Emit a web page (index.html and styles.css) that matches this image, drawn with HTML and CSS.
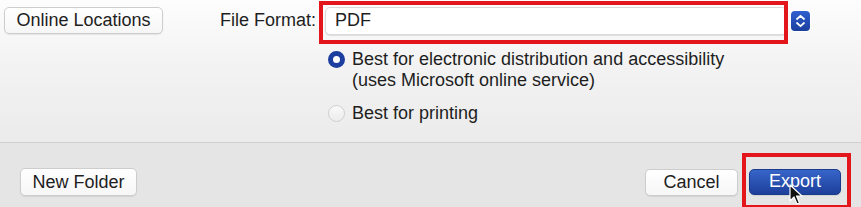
FILE: index.html
```html
<!DOCTYPE html>
<html>
<head>
<meta charset="utf-8">
<link rel="stylesheet" href="styles.css">
</head>
<body>
<div class="dialog">
  <div class="top">
    <div class="row">
      <button class="btn online">Online Locations</button>
      <span class="label">File Format:</span>
      <div class="popup">PDF</div>
      <div class="stepper">
        <svg width="19" height="20" viewBox="0 0 19 20"><path d="M6 8 L9.5 4.8 L13 8" fill="none" stroke="#fff" stroke-width="1.8" stroke-linecap="round" stroke-linejoin="round"/><path d="M6 12 L9.5 15.2 L13 12" fill="none" stroke="#fff" stroke-width="1.8" stroke-linecap="round" stroke-linejoin="round"/></svg>
      </div>
    </div>
    <div class="options">
      <div class="opt">
        <span class="radio on"></span>
        <span class="opt-text">Best for electronic distribution and accessibility<br>(uses Microsoft online service)</span>
      </div>
      <div class="opt second">
        <span class="radio"></span>
        <span class="opt-text">Best for printing</span>
      </div>
    </div>
  </div>
  <div class="bottom">
    <button class="btn folder">New Folder</button>
    <div class="actions">
      <button class="btn cancel">Cancel</button>
      <button class="btn export">Export</button>
    </div>
  </div>
  <div class="hl hl-format"></div>
  <div class="hl hl-export"></div>
  <svg class="cursor" width="14" height="22" viewBox="0 0 14 22"><path d="M1 1 L1 17 L5 13 L8 20 L10.5 19 L7.5 12 L13 12 Z" fill="#111" stroke="#fff" stroke-width="1.2" stroke-linejoin="round"/></svg>
</div>
</body>
</html>
```
FILE: styles.css
```css
* { box-sizing: border-box; }
html, body { margin: 0; padding: 0; }
body {
  width: 861px;
  height: 207px;
  overflow: hidden;
  font-family: "Liberation Sans", Arial, sans-serif;
  color: #1e1e1e;
}
.dialog {
  position: relative;
  width: 861px;
  height: 207px;
  background: #e5e5e5;
}
.top {
  height: 143px;
  background: linear-gradient(#fdfdfd 0%, #f3f3f3 45%, #ebebeb 100%);
  border-bottom: 1px solid #cfcfcf;
  padding-top: 7px;
}
.row {
  display: flex;
  align-items: center;
  height: 27px;
}
.btn {
  font-family: "Liberation Sans", Arial, sans-serif;
  font-size: 18px;
  color: #1e1e1e;
  background: linear-gradient(#ffffff, #f6f6f6);
  border: 1px solid #cdcdcd;
  border-radius: 5px;
  box-shadow: 0 1px 1px rgba(0,0,0,0.08);
  padding: 0;
  height: 27px;
  display: flex;
  align-items: center;
  justify-content: center;
}
.online {
  margin-left: 4px;
  width: 159px;
}
.label {
  font-size: 18px;
  margin-left: 57px;
  width: 105px;
}
.popup {
  width: 462px;
  height: 28px;
  padding-left: 9px;
  font-size: 18px;
  display: flex;
  align-items: center;
  background: #fff;
  border: 1px solid #dadada;
  border-radius: 5px;
  box-shadow: 0 1px 1px rgba(0,0,0,0.1);
}
.stepper {
  width: 19px;
  height: 20px;
  margin-left: 4px;
  border-radius: 4px;
  background: linear-gradient(#2f5fcf, #1a3f9e);
  display: flex;
  align-items: center;
  justify-content: center;
  box-shadow: 0 0 0 1px #fff;
}
.options {
  margin-left: 328px;
  margin-top: 15px;
}
.opt {
  display: flex;
  align-items: flex-start;
}
.opt.second {
  margin-top: 12px;
}
.radio {
  width: 17px;
  height: 17px;
  border-radius: 50%;
  margin-top: 2px;
  background: linear-gradient(#fafafa, #ececec);
  border: 1px solid #cfcfcf;
  flex: none;
}
.radio.on {
  background: #fff;
  border: 5px solid #1c3f9f;
}
.opt-text {
  margin-left: 7px;
  font-size: 18px;
  line-height: 21px;
}
.bottom {
  height: 64px;
  display: flex;
  align-items: center;
  justify-content: space-between;
  padding: 14px 20px 0 20px;
}
.folder { width: 117px; height: 28px; }
.actions { display: flex; gap: 11px; }
.cancel { width: 93px; }
.export {
  width: 92px;
  height: 26px;
  color: #fff;
  background: linear-gradient(#3765c9, #1d3f9a);
  border: 1px solid #1a3a8c;
}
.hl {
  position: absolute;
  border: 4px solid #e3161c;
}
.hl-format { left: 319px; top: 1px; width: 469px; height: 43px; }
.hl-export { left: 742px; top: 153px; width: 109px; height: 56px; }
.cursor { position: absolute; left: 789px; top: 184px; }
```
